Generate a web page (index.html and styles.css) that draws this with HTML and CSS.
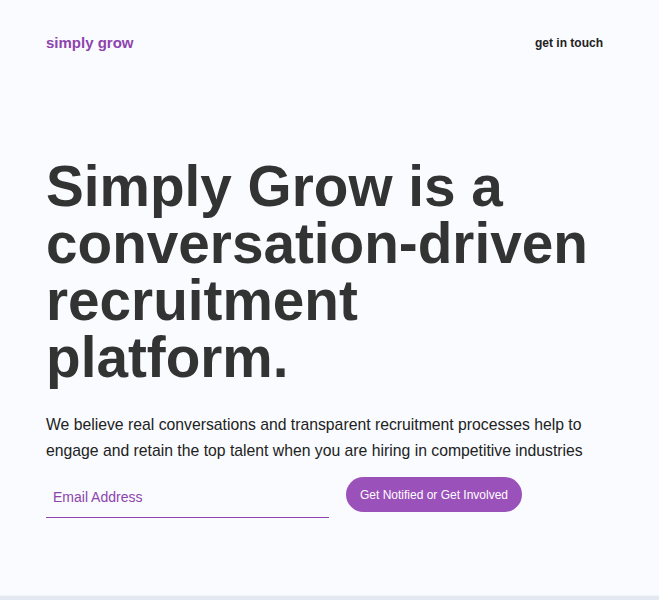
FILE: index.html
```html
<!DOCTYPE html>
<html lang="en">
<head>
<meta charset="utf-8">
<title>Simply Grow</title>
<link rel="stylesheet" href="styles.css">
</head>
<body>
<div class="page">
  <header class="header">
    <a class="logo" href="#">simply grow</a>
    <a class="contact" href="#">get in touch</a>
  </header>
  <main class="hero">
    <h1 class="title">Simply Grow is a conversation-driven recruitment platform.</h1>
    <p class="lead">We believe real conversations and transparent recruitment processes help to engage and retain the top talent when you are hiring in competitive industries</p>
    <form class="signup">
      <input class="email" type="email" placeholder="Email Address">
      <button class="cta" type="button">Get Notified or Get Involved</button>
    </form>
  </main>
</div>
<div class="bottom-bar"></div>
</body>
</html>
```
FILE: styles.css
```css
html, body {
  margin: 0;
  padding: 0;
}
body {
  background: #f9fbfe;
  font-family: "Liberation Sans", Arial, sans-serif;
  color: #333333;
  height: 600px;
  display: flex;
  flex-direction: column;
}
.page {
  flex: 1;
  padding: 0 56px 0 46px;
}
.header {
  display: flex;
  justify-content: space-between;
  align-items: center;
  height: 85px;
}
.logo {
  color: #8e44ad;
  font-weight: bold;
  font-size: 15px;
  text-decoration: none;
}
.contact {
  color: #222222;
  font-weight: bold;
  font-size: 12px;
  text-decoration: none;
}
.hero {
  padding-top: 73px;
}
.title {
  margin: 0;
  font-size: 56.7px;
  line-height: 57px;
  font-weight: bold;
  color: #333333;
  max-width: 560px;
}
.lead {
  margin: 26px 0 0;
  font-size: 15.75px;
  line-height: 26px;
  color: #222222;
}
.signup {
  display: flex;
  align-items: flex-start;
  gap: 17px;
  margin-top: 13px;
}
.email {
  width: 283px;
  height: 41px;
  box-sizing: border-box;
  border: none;
  border-bottom: 1px solid #8e44ad;
  background: transparent;
  padding: 0 7px;
  font-family: "Liberation Sans", Arial, sans-serif;
  font-size: 14px;
  color: #8e44ad;
  outline: none;
}
.email::placeholder {
  color: #8e44ad;
  opacity: 1;
}
.cta {
  height: 35px;
  width: 176px;
  border: none;
  border-radius: 17.5px;
  background: #9b51ba;
  color: #ffffff;
  font-family: "Liberation Sans", Arial, sans-serif;
  font-size: 12px;
  padding: 0;
}
.bottom-bar {
  height: 4px;
  background: #e4e8f0;
  border-top: 1px solid #eef6f7;
}
```
